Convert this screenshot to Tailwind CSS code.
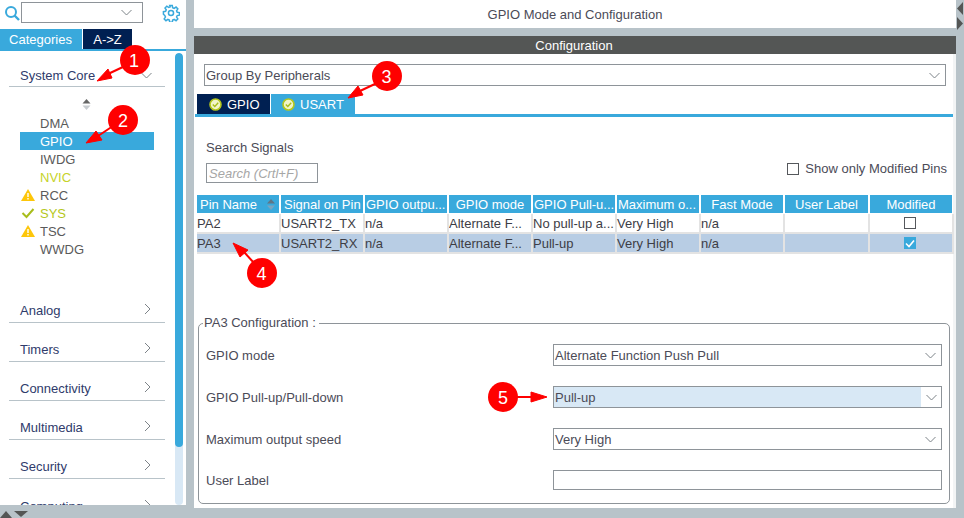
<!DOCTYPE html>
<html>
<head>
<meta charset="utf-8">
<script src="https://cdn.jsdelivr.net/npm/@tailwindcss/browser@4"></script>
</head>
<body class="m-0">
<div class="relative flex w-[964px] h-[518px] overflow-hidden bg-[#b8c3c9] font-['Liberation_Sans',Arial,sans-serif] text-[13px] leading-none text-[#4b4b57]">

  <!-- Sidebar -->
  <aside class="w-[186px] h-[505px] shrink-0 bg-white flex flex-col overflow-hidden">
    <div class="h-[29px] shrink-0 flex items-start pt-[2px] pl-[4px]">
      <svg class="w-[17px] h-[21px] shrink-0" viewBox="0 0 17 21" fill="none" stroke="#39a9dc"><circle cx="7" cy="10" r="5" stroke-width="2"/><path d="M10.5 13.5 L15 18" stroke-width="2.4"/></svg>
      <div class="w-[122px] h-[21px] border border-[#8e9499] flex items-center justify-end pr-[10px]">
        <svg class="w-[11px] h-[7px]" viewBox="0 0 11 7" fill="none" stroke="#7d8388"><path d="M0.5 1 L5.5 6 L10.5 1"/></svg>
      </div>
      <svg class="w-[18px] h-[18px] ml-[19px] mt-[2px] shrink-0" viewBox="0 0 24 24" fill="none" stroke="#39a9dc" stroke-width="2"><circle cx="12" cy="12" r="3.4"/><path d="M10.3 2h3.4l.5 2.9 2 .9 2.5-1.7 2.4 2.4-1.7 2.5.9 2 2.9.5v3.4l-2.9.5-.9 2 1.7 2.5-2.4 2.4-2.5-1.7-2 .9-.5 2.9h-3.4l-.5-2.9-2-.9-2.5 1.7-2.4-2.4 1.7-2.5-.9-2L1.9 13.7v-3.4l2.9-.5.9-2L4 5.3l2.4-2.4 2.5 1.7 2-.9z"/></svg>
    </div>
    <div class="flex h-[22px] shrink-0 border-b-2 border-[#39a9dc] text-[13px]">
      <div class="w-[82px] h-[20px] bg-[#39a9dc] text-white flex items-center justify-center pr-[1px]">Categories</div>
      <div class="w-[49px] h-[20px] ml-px bg-[#002052] text-white flex items-center justify-center">A-&gt;Z</div>
    </div>
    <div class="flex flex-1 min-h-0">
      <div class="w-[175px] shrink-0 overflow-hidden text-[#2f3b6b]">
        <div class="ml-[9px] w-[156px] h-[36px] border-b border-[#b8c3c9] flex items-center justify-between pl-[11px] pr-[13px] pt-[13px] mb-0">
          <span>System Core</span>
          <svg class="w-[11px] h-[7px]" viewBox="0 0 11 7" fill="none" stroke="#7d8388"><path d="M0.5 1 L5.5 6 L10.5 1"/></svg>
        </div>
        <div class="h-[27px] flex items-end justify-center pr-[3px] pb-[3px]">
          <svg class="w-[9px] h-[13px]" viewBox="0 0 9 13"><path d="M4.5 1 L8.5 5.5 H0.5 Z" fill="#666"/><path d="M4.5 12 L8.5 7.5 H0.5 Z" fill="#c8ccd0"/></svg>
        </div>
        <ul class="text-[#5a5a5a]">
          <li class="h-[18px] ml-[40px] flex items-center">DMA</li>
          <li class="h-[18px] ml-[20px] w-[134px] pl-[20px] bg-[#39a9dc] text-white flex items-center">GPIO</li>
          <li class="h-[18px] ml-[40px] flex items-center">IWDG</li>
          <li class="h-[18px] ml-[40px] flex items-center text-[#c6d32a]">NVIC</li>
          <li class="h-[18px] ml-[21px] flex items-center gap-[5px]"><svg class="w-[14px] h-[12px]" viewBox="0 0 14 12"><path d="M7 0 L14 12 H0 Z" fill="#fdc60a"/><path d="M7 4 V8 M7 9 V10.5" stroke="#fff" stroke-width="1.4"/></svg>RCC</li>
          <li class="h-[18px] ml-[21px] flex items-center gap-[5px] text-[#b5c71c]"><svg class="w-[14px] h-[12px]" viewBox="0 0 14 12" fill="none" stroke="#a8bd1c" stroke-width="2"><path d="M1.5 6 L5.5 10 L12.5 2"/></svg>SYS</li>
          <li class="h-[18px] ml-[21px] flex items-center gap-[5px]"><svg class="w-[14px] h-[12px]" viewBox="0 0 14 12"><path d="M7 0 L14 12 H0 Z" fill="#fdc60a"/><path d="M7 4 V8 M7 9 V10.5" stroke="#fff" stroke-width="1.4"/></svg>TSC</li>
          <li class="h-[18px] ml-[40px] flex items-center">WWDG</li>
        </ul>
        <div class="mt-[26px]">
          <div class="ml-[9px] w-[156px] h-[39px] border-b border-[#b8c3c9] flex items-end justify-between pl-[11px] pr-[14px] pb-[5px]"><span>Analog</span><svg class="w-[7px] h-[12px] mb-[2px]" viewBox="0 0 7 12" fill="none" stroke="#7d8388"><path d="M1 1 L6 6 L1 11"/></svg></div>
          <div class="ml-[9px] w-[156px] h-[39px] border-b border-[#b8c3c9] flex items-end justify-between pl-[11px] pr-[14px] pb-[5px]"><span>Timers</span><svg class="w-[7px] h-[12px] mb-[2px]" viewBox="0 0 7 12" fill="none" stroke="#7d8388"><path d="M1 1 L6 6 L1 11"/></svg></div>
          <div class="ml-[9px] w-[156px] h-[39px] border-b border-[#b8c3c9] flex items-end justify-between pl-[11px] pr-[14px] pb-[5px]"><span>Connectivity</span><svg class="w-[7px] h-[12px] mb-[2px]" viewBox="0 0 7 12" fill="none" stroke="#7d8388"><path d="M1 1 L6 6 L1 11"/></svg></div>
          <div class="ml-[9px] w-[156px] h-[39px] border-b border-[#b8c3c9] flex items-end justify-between pl-[11px] pr-[14px] pb-[5px]"><span>Multimedia</span><svg class="w-[7px] h-[12px] mb-[2px]" viewBox="0 0 7 12" fill="none" stroke="#7d8388"><path d="M1 1 L6 6 L1 11"/></svg></div>
          <div class="ml-[9px] w-[156px] h-[39px] border-b border-[#b8c3c9] flex items-end justify-between pl-[11px] pr-[14px] pb-[5px]"><span>Security</span><svg class="w-[7px] h-[12px] mb-[2px]" viewBox="0 0 7 12" fill="none" stroke="#7d8388"><path d="M1 1 L6 6 L1 11"/></svg></div>
          <div class="ml-[9px] w-[156px] h-[39px] flex items-end justify-between pl-[11px] pr-[14px] pb-[5px]"><span>Computing</span><svg class="w-[7px] h-[12px] mb-[2px]" viewBox="0 0 7 12" fill="none" stroke="#7d8388"><path d="M1 1 L6 6 L1 11"/></svg></div>
        </div>
      </div>
      <div class="w-[8px] shrink-0 mt-[2px] h-[452px] rounded-[4px] bg-[#d8e8f5] overflow-hidden">
        <div class="h-[394px] rounded-[4px] bg-[#39a9dc]"></div>
      </div>
    </div>
  </aside>

  <!-- Main -->
  <main class="ml-[8px] w-[762px] shrink-0 h-[508px] flex flex-col">
    <div class="h-[28px] shrink-0 bg-white flex items-center justify-center">GPIO Mode and Configuration</div>
    <div class="h-[8px] shrink-0"></div>
    <div class="h-[18px] shrink-0 bg-[#545655] text-white flex items-center justify-center pr-[2px]">Configuration</div>
    <div class="flex-1 bg-white border-r-[3px] border-[#f2f4f5] pl-[1px]">
      <div class="ml-[9px] mt-[10px] w-[742px] h-[22px] border border-[#8e9499] flex items-center justify-between pl-[1px] pr-[5px]">
        <span>Group By Peripherals</span>
        <svg class="w-[11px] h-[7px]" viewBox="0 0 11 7" fill="none" stroke="#7d8388"><path d="M0.5 1 L5.5 6 L10.5 1"/></svg>
      </div>
      <div class="mt-[8px] h-[23px] border-b-[3px] border-[#39a9dc] flex pl-[2px] text-white">
        <div class="w-[73px] h-[20px] bg-[#002052] flex items-center pl-[12px] gap-[5px]">
          <svg class="w-[13px] h-[13px]" viewBox="0 0 13 13" fill="none"><circle cx="6.5" cy="6.5" r="5.5" fill="#f2f5c8" stroke="#b5c71c" stroke-width="1.6"/><path d="M3.8 6.5 L5.8 8.5 L9.2 4.8" stroke="#a8bd1c" stroke-width="1.4"/></svg>
          GPIO
        </div>
        <div class="w-[84px] h-[20px] ml-px bg-[#39a9dc] flex items-center pl-[11px] gap-[5px]">
          <svg class="w-[13px] h-[13px]" viewBox="0 0 13 13" fill="none"><circle cx="6.5" cy="6.5" r="5.5" fill="#f2f5c8" stroke="#b5c71c" stroke-width="1.6"/><path d="M3.8 6.5 L5.8 8.5 L9.2 4.8" stroke="#a8bd1c" stroke-width="1.4"/></svg>
          USART
        </div>
      </div>

      <div class="ml-[11px] mt-[24px]">Search Signals</div>
      <div class="flex items-start justify-between mt-[9px] pl-[11px] pr-[6px]">
        <div class="w-[112px] h-[20px] border border-[#8e9499] flex items-center pl-[2px] italic text-[#a6a6a6]">Search (Crtl+F)</div>
        <div class="flex items-center gap-[6px] -mt-px">
          <span class="w-[12px] h-[12px] border border-[#55585c]"></span>
          <span>Show only Modified Pins</span>
        </div>
      </div>

      <div class="ml-[2px] mt-[12px] w-[757px] grid grid-cols-[repeat(7,84px)_85px_84px] text-[#3d3d45]">
        <div class="h-[18px] mr-[2px] bg-[#39a9dc] text-white flex items-center justify-between pl-[3px] pr-[4px]">Pin Name<svg class="w-[8px] h-[11px]" viewBox="0 0 8 11"><path d="M4 0 L8 4.5 H0 Z" fill="#5f7686"/><path d="M4 11 L8 6.5 H0 Z" fill="#7aa5c0"/></svg></div>
        <div class="h-[18px] mr-[2px] bg-[#39a9dc] text-white flex items-center pl-[3px] whitespace-nowrap overflow-hidden">Signal on Pin</div>
        <div class="h-[18px] mr-[2px] bg-[#39a9dc] text-white flex items-center pl-[1px] whitespace-nowrap overflow-hidden">GPIO outpu...</div>
        <div class="h-[18px] mr-[2px] bg-[#39a9dc] text-white flex items-center justify-center whitespace-nowrap overflow-hidden">GPIO mode</div>
        <div class="h-[18px] mr-[2px] bg-[#39a9dc] text-white flex items-center pl-[1px] whitespace-nowrap overflow-hidden">GPIO Pull-u...</div>
        <div class="h-[18px] mr-[2px] bg-[#39a9dc] text-white flex items-center pl-[1px] whitespace-nowrap overflow-hidden">Maximum o...</div>
        <div class="h-[18px] mr-[2px] bg-[#39a9dc] text-white flex items-center justify-center">Fast Mode</div>
        <div class="h-[18px] mr-[2px] bg-[#39a9dc] text-white flex items-center justify-center">User Label</div>
        <div class="h-[18px] mr-[2px] bg-[#39a9dc] text-white flex items-center justify-center">Modified</div>

        <div class="h-[20px] mt-px border-b-2 border-r-2 border-[#e3e3e3] flex items-center">PA2</div>
        <div class="h-[20px] mt-px border-b-2 border-r-2 border-[#e3e3e3] flex items-center">USART2_TX</div>
        <div class="h-[20px] mt-px border-b-2 border-r-2 border-[#e3e3e3] flex items-center">n/a</div>
        <div class="h-[20px] mt-px border-b-2 border-r-2 border-[#e3e3e3] flex items-center whitespace-nowrap overflow-hidden">Alternate F...</div>
        <div class="h-[20px] mt-px border-b-2 border-r-2 border-[#e3e3e3] flex items-center whitespace-nowrap overflow-hidden">No pull-up a...</div>
        <div class="h-[20px] mt-px border-b-2 border-r-2 border-[#e3e3e3] flex items-center">Very High</div>
        <div class="h-[20px] mt-px border-b-2 border-r-2 border-[#e3e3e3] flex items-center">n/a</div>
        <div class="h-[20px] mt-px border-b-2 border-r-2 border-[#e3e3e3]"></div>
        <div class="h-[20px] mt-px border-b-2 border-r-2 border-[#e3e3e3] flex items-center justify-center pr-[2px]"><span class="w-[12px] h-[12px] border border-[#55585c]"></span></div>

        <div class="h-[20px] bg-[#b8cde4] border-b-2 border-r-2 border-[#e3e3e3] flex items-center">PA3</div>
        <div class="h-[20px] bg-[#b8cde4] border-b-2 border-r-2 border-[#e3e3e3] flex items-center">USART2_RX</div>
        <div class="h-[20px] bg-[#b8cde4] border-b-2 border-r-2 border-[#e3e3e3] flex items-center">n/a</div>
        <div class="h-[20px] bg-[#b8cde4] border-b-2 border-r-2 border-[#e3e3e3] flex items-center whitespace-nowrap overflow-hidden">Alternate F...</div>
        <div class="h-[20px] bg-[#b8cde4] border-b-2 border-r-2 border-[#e3e3e3] flex items-center">Pull-up</div>
        <div class="h-[20px] bg-[#b8cde4] border-b-2 border-r-2 border-[#e3e3e3] flex items-center">Very High</div>
        <div class="h-[20px] bg-[#b8cde4] border-b-2 border-r-2 border-[#e3e3e3] flex items-center">n/a</div>
        <div class="h-[20px] bg-[#b8cde4] border-b-2 border-r-2 border-[#e3e3e3]"></div>
        <div class="h-[20px] bg-[#b8cde4] border-b-2 border-r-2 border-[#e3e3e3] flex items-center justify-center pr-[2px]"><span class="w-[12px] h-[12px] bg-[#39a9dc] flex items-center justify-center"><svg class="w-[10px] h-[9px]" viewBox="0 0 10 9" fill="none" stroke="#fff" stroke-width="1.6"><path d="M1 4.5 L4 7.5 L9 1.5"/></svg></span></div>
      </div>

      <fieldset class="relative ml-[3px] mt-[62px] w-[752px] h-[188px] border border-[#8e9499] rounded-[5px] pl-[7px] pr-[7px] m-0">
        <legend class="ml-[-3px] px-[1px] pr-[3px] text-[13px] leading-[14px]">PA3 Configuration :</legend>
        <div class="flex items-center justify-between h-[22px] mt-[14px]">
          <span>GPIO mode</span>
          <div class="w-[389px] h-[22px] border border-[#8e9499] flex items-center justify-between pl-[1px] pr-[5px]"><span>Alternate Function Push Pull</span><svg class="w-[11px] h-[7px]" viewBox="0 0 11 7" fill="none" stroke="#7d8388"><path d="M0.5 1 L5.5 6 L10.5 1"/></svg></div>
        </div>
        <div class="flex items-center justify-between h-[22px] mt-[20px]">
          <span>GPIO Pull-up/Pull-down</span>
          <div class="w-[389px] h-[22px] border border-[#8e9499] flex items-center"><span class="flex-1 h-full bg-[#d8e8f5] pl-[1px] flex items-center">Pull-up</span><span class="w-[20px] flex justify-center"><svg class="w-[11px] h-[7px]" viewBox="0 0 11 7" fill="none" stroke="#7d8388"><path d="M0.5 1 L5.5 6 L10.5 1"/></svg></span></div>
        </div>
        <div class="flex items-center justify-between h-[22px] mt-[20px]">
          <span>Maximum output speed</span>
          <div class="w-[389px] h-[22px] border border-[#8e9499] flex items-center justify-between pl-[1px] pr-[5px]"><span>Very High</span><svg class="w-[11px] h-[7px]" viewBox="0 0 11 7" fill="none" stroke="#7d8388"><path d="M0.5 1 L5.5 6 L10.5 1"/></svg></div>
        </div>
        <div class="flex items-center justify-between h-[20px] mt-[20px]">
          <span>User Label</span>
          <div class="w-[389px] h-[20px] border border-[#8e9499]"></div>
        </div>
      </fieldset>
    </div>
  </main>

  <!-- Splitter arrows -->
  <svg class="absolute left-[956px] top-[2px] w-[8px] h-[29px]" viewBox="0 0 8 29"><path d="M7 0 L1 6.5 L7 13 Z M1 15 L7 21.5 L1 28 Z" fill="#545655"/></svg>
  <svg class="absolute left-0 top-[509px] w-[30px] h-[9px]" viewBox="0 0 30 9"><path d="M0 9 L6 2 L12 9 Z" fill="#545655"/><path d="M14 2 H28 L21 8 Z" fill="#545655"/></svg>

  <!-- Annotations -->
  <svg class="absolute inset-0 w-[964px] h-[518px] pointer-events-none font-['Liberation_Sans',Arial,sans-serif]" viewBox="0 0 964 518">
    <g fill="#f00" stroke="#f00" stroke-linejoin="round">
      <path d="M125 66 L108 74" stroke-width="2"/><path d="M97 81 L108 69 L112 78 Z"/>
      <path d="M113 126 L98 136" stroke-width="2"/><path d="M86 143 L96 131 L102 140 Z"/>
      <path d="M377 83 L360 91" stroke-width="2"/><path d="M348 98 L358 86 L363 95 Z"/>
      <path d="M254 263 L244 252" stroke-width="2"/><path d="M233 243 L248 250 L240 257 Z"/>
      <path d="M515 397 L532 397" stroke-width="2"/><path d="M547 397 L531 392 L531 402 Z"/>
    </g>
    <g fill="#f00">
      <circle cx="135" cy="60" r="15"/><circle cx="123" cy="120" r="15"/><circle cx="387" cy="76" r="15"/><circle cx="262" cy="273" r="15"/><circle cx="503" cy="397" r="15"/>
    </g>
    <g fill="#fff" font-size="18" text-anchor="middle">
      <text x="134" y="66.500">1</text><text x="123" y="126.500">2</text><text x="386.500" y="82.500">3</text><text x="261.500" y="279.500">4</text><text x="503" y="403.500">5</text>
    </g>
  </svg>
</div>
</body>
</html>
